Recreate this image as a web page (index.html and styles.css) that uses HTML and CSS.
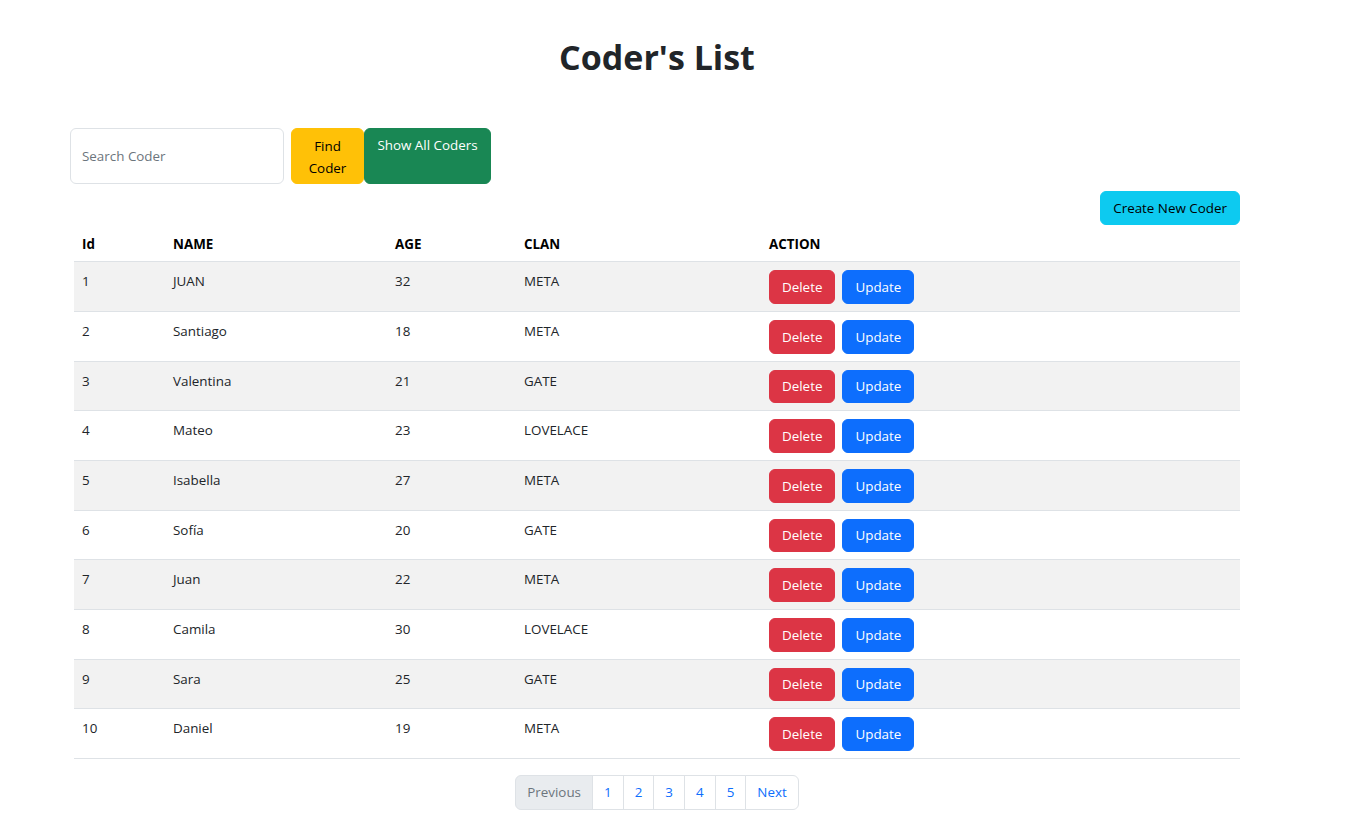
FILE: index.html
```html
<!DOCTYPE html>
<html lang="en">
<head>
<meta charset="utf-8">
<title>Coder's List</title>
<link rel="stylesheet" href="styles.css">
</head>
<body>
<main class="page">
  <h1 class="title">Coder's List</h1>
  <form class="search">
    <input class="search-input" type="text" placeholder="Search Coder">
    <button type="button" class="btn btn-warning btn-find">Find Coder</button>
    <button type="button" class="btn btn-success btn-all">Show All Coders</button>
  </form>
  <div class="create-row">
    <button type="button" class="btn btn-info">Create New Coder</button>
  </div>
  <table class="coders">
    <colgroup>
      <col class="c-id"><col class="c-name"><col class="c-age"><col class="c-clan"><col>
    </colgroup>
    <thead>
      <tr><th>Id</th><th>NAME</th><th>AGE</th><th>CLAN</th><th>ACTION</th></tr>
    </thead>
    <tbody>
      <tr><td>1</td><td>JUAN</td><td>32</td><td>META</td><td class="act"><div class="actions"><button class="btn btn-danger">Delete</button><button class="btn btn-primary">Update</button></div></td></tr>
      <tr><td>2</td><td>Santiago</td><td>18</td><td>META</td><td class="act"><div class="actions"><button class="btn btn-danger">Delete</button><button class="btn btn-primary">Update</button></div></td></tr>
      <tr><td>3</td><td>Valentina</td><td>21</td><td>GATE</td><td class="act"><div class="actions"><button class="btn btn-danger">Delete</button><button class="btn btn-primary">Update</button></div></td></tr>
      <tr><td>4</td><td>Mateo</td><td>23</td><td>LOVELACE</td><td class="act"><div class="actions"><button class="btn btn-danger">Delete</button><button class="btn btn-primary">Update</button></div></td></tr>
      <tr><td>5</td><td>Isabella</td><td>27</td><td>META</td><td class="act"><div class="actions"><button class="btn btn-danger">Delete</button><button class="btn btn-primary">Update</button></div></td></tr>
      <tr><td>6</td><td>Sofía</td><td>20</td><td>GATE</td><td class="act"><div class="actions"><button class="btn btn-danger">Delete</button><button class="btn btn-primary">Update</button></div></td></tr>
      <tr><td>7</td><td>Juan</td><td>22</td><td>META</td><td class="act"><div class="actions"><button class="btn btn-danger">Delete</button><button class="btn btn-primary">Update</button></div></td></tr>
      <tr><td>8</td><td>Camila</td><td>30</td><td>LOVELACE</td><td class="act"><div class="actions"><button class="btn btn-danger">Delete</button><button class="btn btn-primary">Update</button></div></td></tr>
      <tr><td>9</td><td>Sara</td><td>25</td><td>GATE</td><td class="act"><div class="actions"><button class="btn btn-danger">Delete</button><button class="btn btn-primary">Update</button></div></td></tr>
      <tr><td>10</td><td>Daniel</td><td>19</td><td>META</td><td class="act"><div class="actions"><button class="btn btn-danger">Delete</button><button class="btn btn-primary">Update</button></div></td></tr>
    </tbody>
  </table>
  <nav class="pager">
    <ul class="pagination">
      <li class="page-item disabled"><span>Previous</span></li>
      <li class="page-item"><a href="#">1</a></li>
      <li class="page-item"><a href="#">2</a></li>
      <li class="page-item"><a href="#">3</a></li>
      <li class="page-item"><a href="#">4</a></li>
      <li class="page-item"><a href="#">5</a></li>
      <li class="page-item"><a href="#">Next</a></li>
    </ul>
  </nav>
</main>
</body>
</html>
```

FILE: styles.css
```css
* { box-sizing: border-box; }
html, body { margin: 0; padding: 0; background: #fff; }
body {
  font-family: "Open Sans", "Noto Sans", "Liberation Sans", sans-serif;
  font-size: 13.4px;
  line-height: 21px;
  color: #212529;
}
.page {
  width: 1174px;
  margin-left: 70px;
  padding-top: 34px;
}
.title {
  margin: 0;
  text-align: center;
  font-size: 34px;
  line-height: 46px;
  font-weight: 700;
  color: #212529;
}
.search {
  display: flex;
  align-items: stretch;
  height: 56px;
  margin-top: 48px;
}
.search-input {
  width: 214px;
  border: 1px solid #dee2e6;
  border-radius: 6px;
  padding: 0 11px;
  font: inherit;
  color: #212529;
  outline: none;
}
.search-input::placeholder { color: #6c757d; }
.btn {
  font: inherit;
  line-height: 21px;
  border: 1px solid transparent;
  border-radius: 6px;
  padding: 5px 12px;
  cursor: pointer;
  text-align: center;
}
.btn-find {
  width: 73px;
  margin-left: 7px;
  padding-top: 6px;
  line-height: 22px;
  display: flex;
  align-items: flex-start;
  justify-content: center;
}
.btn-all {
  width: 127px;
  padding: 5px 8px 0;
  line-height: 22px;
  white-space: nowrap;
  display: flex;
  align-items: flex-start;
  justify-content: center;
}
.btn-warning { background: #ffc107; border-color: #ffc107; color: #000; }
.btn-success { background: #198754; border-color: #198754; color: #fff; }
.btn-info { background: #0dcaf0; border-color: #0dcaf0; color: #000; }
.btn-danger { background: #dc3545; border-color: #dc3545; color: #fff; }
.btn-primary { background: #0d6efd; border-color: #0d6efd; color: #fff; }
.create-row {
  display: flex;
  justify-content: flex-end;
  margin-top: 7px;
  margin-bottom: -1px;
  padding-right: 4px;
}
.create-row .btn { height: 34px; padding: 0 12px; }
.coders {
  width: 1166px;
  margin: 0 4px;
  border-collapse: collapse;
  table-layout: fixed;
}
.c-id { width: 91px; }
.c-name { width: 222px; }
.c-age { width: 129px; }
.c-clan { width: 245px; }
.coders th {
  text-align: left;
  font-weight: 700;
  color: #000;
  padding: 10px 8px 6px;
  border-bottom: 1px solid #dee2e6;
}
.coders td {
  padding: 9px 8px 7px;
  vertical-align: top;
  border-bottom: 1px solid #dee2e6;
  height: 50px;
}
.coders td.act { padding: 8px 8px 7px; }
.coders tbody tr:nth-child(odd) td { background: #f2f2f2; }
.coders tbody tr:nth-child(3n) td { height: 49px; }
.actions { display: flex; gap: 7px; }
.actions .btn { height: 34px; padding: 0 12px; line-height: 32px; }
.coders tbody tr:nth-child(3n) .actions .btn { height: 33px; line-height: 31px; }
.pager {
  display: flex;
  justify-content: center;
  margin-top: 16px;
}
.pagination {
  display: flex;
  list-style: none;
  margin: 0;
  padding: 0;
}
.page-item a, .page-item span {
  display: block;
  padding: 6px 11px;
  line-height: 21px;
  border: 1px solid #dee2e6;
  margin-left: -1px;
  color: #0d6efd;
  text-decoration: none;
  background: #fff;
}
.page-item:first-child span { margin-left: 0; border-radius: 6px 0 0 6px; }
.page-item:last-child a { border-radius: 0 6px 6px 0; }
.page-item.disabled span { background: #e9ecef; color: #6c757d; }
```
